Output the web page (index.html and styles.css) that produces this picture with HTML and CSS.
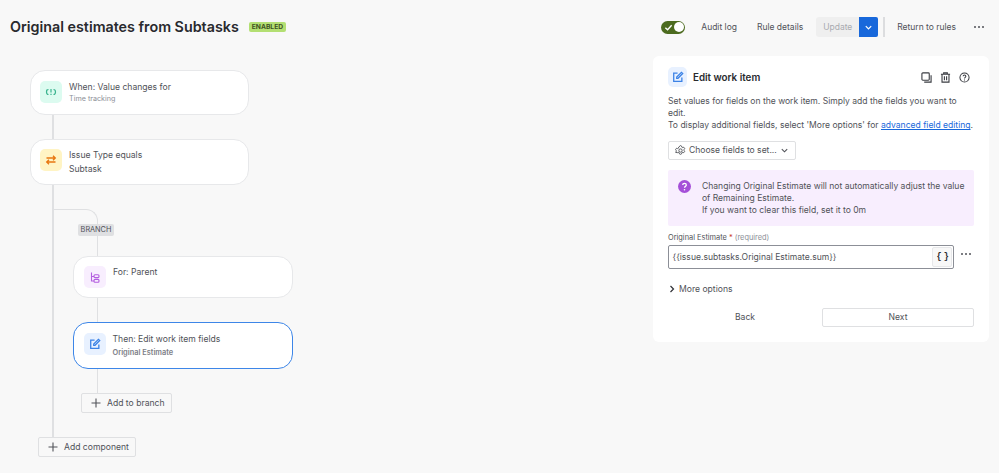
FILE: index.html
```html
<!DOCTYPE html>
<html lang="en">
<head>
<meta charset="utf-8">
<title>Original estimates from Subtasks</title>
<link rel="stylesheet" href="styles.css">
</head>
<body>
<div class="page">
  <header class="topbar">
    <div class="title-group">
      <h1 class="title">Original estimates from Subtasks</h1>
      <span class="lozenge">ENABLED</span>
    </div>
    <div class="actions">
      <span class="toggle"><svg class="toggle-check" width="9" height="9" viewBox="0 0 10 10"><path d="M1.500 5.200 4 7.500 8.500 2.500" fill="none" stroke="#fff" stroke-width="1.500"/></svg><span class="toggle-knob"></span></span>
      <span class="action action-audit">Audit log</span>
      <span class="action action-details">Rule details</span>
      <span class="update-group">
        <span class="update">Update</span>
        <span class="update-menu"><svg width="9" height="9" viewBox="0 0 10 10"><path d="M2 3.500 5 6.500 8 3.500" fill="none" stroke="#fff" stroke-width="1.400"/></svg></span>
      </span>
      <span class="divider"></span>
      <span class="action action-return">Return to rules</span>
      <svg class="more" width="12" height="4" viewBox="0 0 12 4"><circle cx="2" cy="2" r="1" fill="#505258"/><circle cx="6" cy="2" r="1" fill="#505258"/><circle cx="10" cy="2" r="1" fill="#505258"/></svg>
    </div>
  </header>

  <main class="canvas">
    <span class="line line-main"></span>
    <span class="branch-curve"></span>
    <span class="line line-branch"></span>

    <div class="node node-when">
      <span class="node-icon icon-green"><svg width="12" height="12" viewBox="0 0 12 12" fill="none" stroke="#3bb48f" stroke-width="1.200"><path d="M3.500 3.500C2 3.500 1.500 4 1.500 6s.5 2.500 2 2.500M8.500 3.500c1.500 0 2 .5 2 2.500s-.5 2.500-2 2.500"/><path d="M6 3v3.500M6 7.800v1.200"/></svg></span>
      <div class="node-text"><div class="node-title">When: Value changes for</div><div class="node-sub">Time tracking</div></div>
    </div>
    <div class="node node-if">
      <span class="node-icon icon-yellow"><svg width="12" height="12" viewBox="0 0 12 12" fill="none" stroke="#e8760f" stroke-width="1.300"><path d="M1.500 4h8.500M8 1.800 10.300 4 8 6.200M10.500 8H2M4 5.800 1.700 8 4 10.200"/></svg></span>
      <div class="node-text"><div class="node-title">Issue Type equals</div><div class="node-line2">Subtask</div></div>
    </div>
    <span class="branch-label">BRANCH</span>
    <div class="node node-for">
      <span class="node-icon icon-purple"><svg width="12" height="12" viewBox="0 0 12 12" fill="none" stroke="#b45fe0" stroke-width="1.100"><path d="M2.500 1.500v8.500h2.500M2.500 5.500h2.500"/><rect x="5" y="3.800" width="5" height="2.800" rx="1"/><rect x="5" y="8.400" width="5" height="2.800" rx="1"/></svg></span>
      <div class="node-text"><div class="node-title">For: Parent</div></div>
    </div>
    <div class="node node-then">
      <span class="node-icon icon-blue"><svg width="12" height="12" viewBox="0 0 14 14" fill="none" stroke="#3b82e6" stroke-width="1.500"><path d="M6.500 2.500H2v9.500h9.500V7.500"/><path d="M5.500 8.500V7l5.500-5.500 1.500 1.500L7 8.500z"/></svg></span>
      <div class="node-text"><div class="node-title">Then: Edit work item fields</div><div class="node-sub node-sub-strong">Original Estimate</div></div>
    </div>
    <button class="add add-branch"><svg width="10" height="10" viewBox="0 0 10 10"><path d="M5 0.500v9M0.500 5h9" stroke="#505258" stroke-width="1.100"/></svg>Add to branch</button>
    <button class="add add-component"><svg width="10" height="10" viewBox="0 0 10 10"><path d="M5 0.500v9M0.500 5h9" stroke="#505258" stroke-width="1.100"/></svg>Add component</button>

    <section class="panel">
      <div class="panel-head">
        <span class="node-icon icon-blue panel-icon"><svg width="12" height="12" viewBox="0 0 14 14" fill="none" stroke="#3b82e6" stroke-width="1.500"><path d="M6.500 2.500H2v9.500h9.500V7.500"/><path d="M5.500 8.500V7l5.500-5.500 1.500 1.500L7 8.500z"/></svg></span>
        <h2 class="panel-title">Edit work item</h2>
        <div class="panel-tools">
          <svg width="11" height="11" viewBox="0 0 12 12" fill="none" stroke="#3a3c42" stroke-width="1.200"><rect x="1" y="1" width="8" height="8" rx="1"/><path d="M11 3.500V11H3.500"/></svg>
          <svg width="11" height="11" viewBox="0 0 12 12" fill="none" stroke="#3a3c42" stroke-width="1.200"><path d="M1 2.500h10M4 2.500V1h4v1.500M2.200 2.500v8.500h7.600V2.500M4.800 4.500v4.500M7.200 4.500v4.500"/></svg>
          <svg width="11" height="11" viewBox="0 0 12 12" fill="none" stroke="#3a3c42" stroke-width="1.100"><circle cx="6" cy="6" r="5"/><path d="M4.500 4.700c0-2 3-2 3 0 0 1.200-1.500 1.200-1.500 2.500M6 8.300v1"/></svg>
        </div>
      </div>
      <p class="panel-desc">Set values for fields on the work item. Simply add the fields you want to<br>edit.<br>To display additional fields, select 'More options' for <a class="link" href="#">advanced field editing</a>.</p>
      <button class="choose"><svg width="11" height="11" viewBox="0 0 12 12" fill="none" stroke="#505258" stroke-width="1"><path d="M6 .6l1.200.6.200 1.100 1.100.500 1-.4 1.100 1.500-.7.900v1.200l.7.900-1.100 1.500-1-.4-1.100.500-.2 1.100-1.200.6-1.200-.6-.2-1.100-1.100-.5-1 .4L.6 8l.7-.9V5.900l-.7-.9 1.100-1.500 1 .4 1.100-.5.200-1.100z"/><circle cx="6" cy="6" r="1.800"/></svg><span class="choose-text">Choose fields to set...</span><svg width="9" height="9" viewBox="0 0 10 10"><path d="M2 3.500 5 6.500 8 3.500" fill="none" stroke="#505258" stroke-width="1.200"/></svg></button>
      <div class="notice">
        <svg class="notice-icon" width="13" height="13" viewBox="0 0 13 13"><circle cx="6.500" cy="6.500" r="6.500" fill="#a54fd8"/><path d="M4.700 5c0-2.300 3.600-2.300 3.600 0 0 1.400-1.800 1.300-1.800 2.700" fill="none" stroke="#fff" stroke-width="1.300"/><circle cx="6.500" cy="9.800" r=".8" fill="#fff"/></svg>
        <p class="notice-text">Changing Original Estimate will not automatically adjust the value<br>of Remaining Estimate.<br>If you want to clear this field, set it to 0m</p>
      </div>
      <label class="field-label">Original Estimate <span class="req">*</span> <span class="req-note">(required)</span></label>
      <div class="field-row">
        <div class="input">
          <span class="input-value">{{issue.subtasks.Original Estimate.sum}}</span>
          <span class="braces">{ }</span>
        </div>
        <svg class="field-more" width="12" height="4" viewBox="0 0 12 4"><circle cx="2" cy="2" r="1" fill="#505258"/><circle cx="6" cy="2" r="1" fill="#505258"/><circle cx="10" cy="2" r="1" fill="#505258"/></svg>
      </div>
      <div class="more-options"><svg width="8" height="8" viewBox="0 0 8 8"><path d="M2.500 1 5.500 4 2.500 7" fill="none" stroke="#2f3036" stroke-width="1.200"/></svg>More options</div>
      <div class="panel-foot">
        <button class="foot-btn back">Back</button>
        <button class="foot-btn next">Next</button>
      </div>
    </section>
  </main>
</div>
</body>
</html>
```

FILE: styles.css
```css
* { box-sizing: border-box; }
html, body { margin: 0; height: 100%; }
body {
  background: #f8f8f8;
  font-family: Inter, "Liberation Sans", sans-serif;
  color: #505258;
  overflow: hidden;
}
.page { width: 999px; height: 473px; display: flex; flex-direction: column; }

/* Top bar */
.topbar {
  display: flex;
  align-items: center;
  justify-content: space-between;
  height: 54px;
  padding: 0 14px 0 10px;
}
.title-group { display: flex; align-items: center; gap: 10px; }
.title { margin: 0; font-size: 14.300px; font-weight: 600; color: #292a2e; line-height: 20px; }
.lozenge {
  background: #b3df72;
  color: #3f5224;
  border-radius: 2px;
  font-size: 6.700px;
  font-weight: 700;
  line-height: 10px;
  padding: 0 3px;
}
.actions { display: flex; align-items: center; }
.toggle {
  position: relative;
  display: block;
  width: 24px;
  height: 13px;
  border-radius: 7px;
  background: #4c6b1f;
  margin-right: 16px;
}
.toggle-check { position: absolute; left: 3px; top: 2px; }
.toggle-knob { position: absolute; right: 1.500px; top: 1.500px; width: 10px; height: 10px; border-radius: 50%; background: #fff; }
.action { font-size: 8.500px; color: #505258; line-height: 20px; white-space: nowrap; }
.action-audit { margin-right: 20px; }
.action-details { margin-right: 13px; }
.update-group { display: flex; height: 20px; }
.update {
  width: 43px;
  background: #efefef;
  color: #a9abaf;
  font-size: 8.500px;
  line-height: 20px;
  text-align: center;
  border-radius: 3px 0 0 3px;
}
.update-menu {
  width: 19px;
  background: #1868db;
  border-radius: 0 2px 2px 0;
  display: flex;
  align-items: center;
  justify-content: center;
}
.divider { width: 1.500px; height: 20px; background: #dcdddf; margin: 0 12.500px 0 5px; }
.action-return { margin-right: 17px; }
.more { display: block; }

/* Canvas */
.canvas { position: relative; flex: 1; }
.line { position: absolute; background: #dfe0e2; }
.line-main { left: 52px; top: 61px; width: 2px; height: 323px; }
.line-branch { left: 96.500px; top: 182px; width: 1.500px; height: 157px; }
.branch-curve {
  position: absolute;
  left: 53px;
  top: 155px;
  width: 45px;
  height: 20px;
  border-top: 1.500px solid #dfe0e2;
  border-right: 1.500px solid #dfe0e2;
  border-top-right-radius: 12px;
}
.branch-label {
  position: absolute;
  left: 78px;
  top: 170px;
  height: 12px;
  width: 36px;
  background: #dfe0e2;
  border-radius: 2px;
  color: #505258;
  font-size: 7.300px;
  line-height: 12px;
  text-align: center;
}
.node {
  position: absolute;
  display: flex;
  gap: 7px;
  background: #fff;
  border: 1px solid #e7e8ea;
  border-radius: 15px;
}
.node-when { left: 30px; top: 16px; width: 219px; height: 45px; padding: 10px 9px 0; }
.node-if { left: 30px; top: 85px; width: 219px; height: 46px; padding: 9px 9px 0; }
.node-for { left: 73px; top: 202px; width: 220px; height: 42px; padding: 9px 10px 0; }
.node-then {
  left: 73px;
  top: 268px;
  width: 220px;
  height: 47px;
  padding: 9.500px 9.500px 0;
  border: 1.500px solid #3d86e8;
}
.node-icon {
  flex: none;
  width: 22px;
  height: 22px;
  border-radius: 5px;
  display: flex;
  align-items: center;
  justify-content: center;
}
.icon-green { background: #dcfbf0; }
.icon-yellow { background: #fff4c4; }
.icon-purple { background: #f8eefe; }
.icon-blue { background: #e8f1ff; }
.node-text { min-width: 0; }
.node-title { font-size: 8.600px; line-height: 12px; color: #505258; }
.node-sub { font-size: 7.200px; line-height: 12px; color: #8c8f97; }
.node-sub-strong { font-size: 7.400px; font-weight: 600; color: #7d8087; margin-top: 2px; }
.node-line2 { font-size: 8.600px; line-height: 12px; color: #505258; margin-top: 2px; }
.add {
  position: absolute;
  display: flex;
  align-items: center;
  gap: 6px;
  height: 20px;
  padding: 0 0 0 9px;
  background: #f8f8f8;
  border: 1px solid #dfe0e2;
  border-radius: 2px;
  font: 8.600px/18px Inter, "Liberation Sans", sans-serif;
  color: #505258;
  white-space: nowrap;
}
.add-branch { left: 81px; top: 339px; width: 91px; }
.add-component { left: 38px; top: 383px; width: 98px; }

/* Panel */
.panel {
  position: absolute;
  left: 653px;
  top: 2px;
  width: 336px;
  height: 286px;
  background: #fff;
  border-radius: 6px;
  padding: 11px 15px 0;
}
.panel-head { display: flex; align-items: center; height: 20px; }
.panel-icon { width: 19px; height: 20px; margin-right: 6px; }
.panel-title { margin: 0; font-size: 9.800px; font-weight: 600; color: #292a2e; flex: 1; }
.panel-tools { display: flex; gap: 8px; margin-right: 4px; }
.panel-desc { margin: 8px 0 0; font-size: 8.550px; line-height: 12.200px; color: #505258; white-space: nowrap; }
.link { color: #1868db; }
.choose {
  display: flex;
  align-items: center;
  gap: 3px;
  margin-top: 9px;
  width: 128px;
  height: 19px;
  padding: 0 6px;
  background: #fff;
  border: 1px solid #dfe0e2;
  border-radius: 2px;
  font: 8.550px/17px Inter, "Liberation Sans", sans-serif;
  color: #505258;
  white-space: nowrap;
}
.choose-text { flex: none; }
.notice {
  display: flex;
  gap: 11px;
  margin-top: 10px;
  height: 56px;
  width: 306px;
  padding: 10px 5px 0 10px;
  background: #f8eefe;
  border-radius: 2px;
}
.notice-icon { flex: none; }
.notice-text { margin: 0; font-size: 8.550px; line-height: 12.300px; color: #505258; white-space: nowrap; }
.field-label { display: block; margin-top: 6px; font-size: 7.400px; line-height: 12px; font-weight: 400; color: #505258; }
.req { color: #c9372c; }
.req-note { font-weight: 400; color: #8c8f97; }
.field-row { display: flex; align-items: center; gap: 6px; margin-top: 1px; }
.input {
  display: flex;
  align-items: center;
  justify-content: space-between;
  width: 286px;
  height: 24px;
  padding: 0 1px 0 3.500px;
  background: #fff;
  border: 1px solid #8c8f97;
  border-radius: 2px;
}
.input-value { font-size: 8.550px; color: #505258; }
.braces {
  width: 20px;
  height: 20px;
  background: #f8f8f8;
  border: 1px solid #e7e8ea;
  border-radius: 2px;
  color: #292a2e;
  font: 600 8.500px/18px "Liberation Mono", monospace;
  letter-spacing: -1.500px;
  text-align: center;
}
.field-more { margin-top: -5px; }
.more-options {
  display: flex;
  align-items: center;
  gap: 3px;
  margin-top: 13px;
  font-size: 8.600px;
  line-height: 14px;
  color: #505258;
}
.panel-foot { display: flex; align-items: center; margin-top: 12px; }
.foot-btn { height: 19px; font: 8.600px/17px Inter, "Liberation Sans", sans-serif; color: #505258; background: #fff; border-radius: 2px; padding: 0; }
.back { width: 154px; border: 0; }
.next { width: 152px; border: 1px solid #dfe0e2; }
```
